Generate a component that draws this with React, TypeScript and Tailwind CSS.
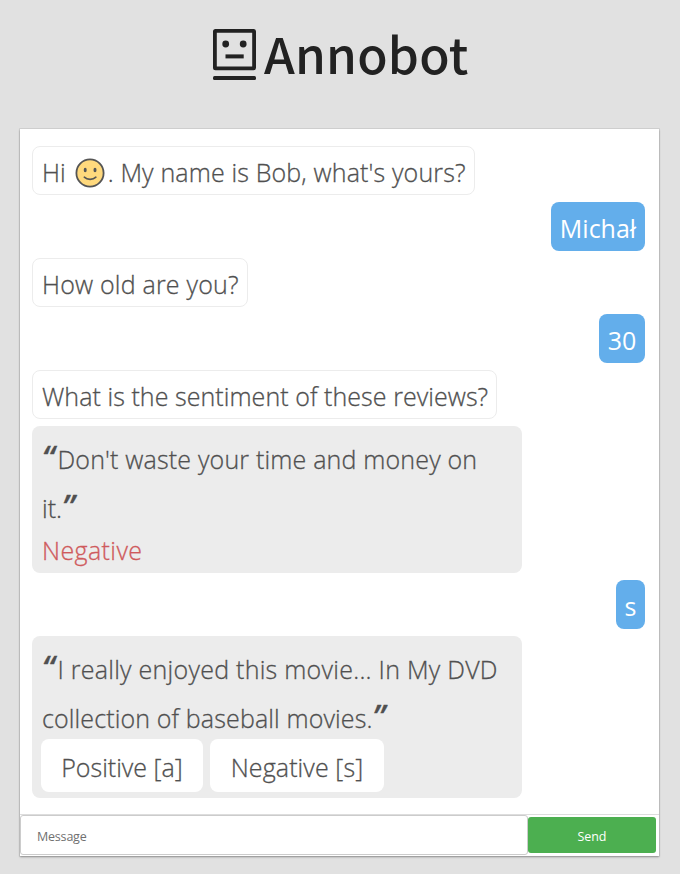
import type { ReactNode } from "react";

function Robot() {
  return (
    <svg className="mt-[29px] h-[51px] w-[43px] shrink-0" viewBox="0 0 43 51" fill="none">
      <rect x="1.9" y="1.9" width="39.2" height="37.5" rx="0.6" stroke="#222" strokeWidth="3.8" />
      <circle cx="12.7" cy="15" r="3.4" fill="#222" />
      <circle cx="30.2" cy="15" r="3.4" fill="#222" />
      <rect x="12.5" y="25.4" width="18.2" height="4" fill="#222" />
      <rect x="0" y="47" width="43" height="4" rx="1.5" fill="#222" />
    </svg>
  );
}

function Smile() {
  return (
    <svg className="mt-[11px] ml-[9px] mr-[3px] h-[30px] w-[30px] shrink-0" viewBox="0 0 30 30" fill="none">
      <circle cx="15" cy="15" r="13.6" fill="#ffd97d" stroke="#555" strokeWidth="1.8" />
      <ellipse cx="10.2" cy="12" rx="1.5" ry="2.2" fill="#555" />
      <ellipse cx="20" cy="12" rx="1.5" ry="2.2" fill="#555" />
      <path d="M9.3 19.2C12.3 22.1 17.9 22.1 20.9 19.2" stroke="#555" strokeWidth="1.6" strokeLinecap="round" />
    </svg>
  );
}

function Bot({ width, children }: { width: string; children: ReactNode }) {
  return (
    <div className={`flex h-[49px] rounded-lg border border-[#ececec] pl-[9px] leading-[51px] ${width}`}>
      {children}
    </div>
  );
}

function User({ width, children }: { width: string; children: ReactNode }) {
  return (
    <div className={`h-[49px] self-end rounded-lg bg-[#63aeeb] text-center font-normal leading-[52px] text-white [-webkit-text-stroke:0px] ${width}`}>
      {children}
    </div>
  );
}

function Quote({ children }: { children: ReactNode }) {
  return <span className="text-[32px] leading-[0] font-semibold italic">{children}</span>;
}

export default function App() {
  return (
    <div className="flex h-[874px] w-[680px] flex-col overflow-hidden bg-[#e1e1e1]">
      <header className="flex h-[129px] shrink-0 pl-[213px]">
        <Robot />
        <h1 className="ml-2 mt-[16px] whitespace-nowrap font-['Noto_Sans_CJK_JP',sans-serif] text-[49.5px] font-medium leading-[74px] tracking-[0.2px] text-[#222]">
          Annobot
        </h1>
      </header>
      <main className="ml-5 flex h-[727px] w-[639px] shrink-0 flex-col bg-white shadow-[0_1px_2px_0_rgba(0,0,0,0.35),0_0_0_1px_rgba(0,0,0,0.06)]">
        <div className="flex h-[685px] flex-col items-start gap-[7px] whitespace-nowrap pl-3 pr-[14px] pt-[17px] font-['Open_Sans',sans-serif] text-[25px] font-light text-[#505050] [-webkit-text-stroke:0.3px]">
          <Bot width="w-[443px]">
            <span>Hi</span>
            <Smile />
            <span className="tracking-[0.15px]">. My name is Bob, what's yours?</span>
          </Bot>
          <User width="w-[94px]">Michał</User>
          <Bot width="w-[216px]">
            <span className="tracking-[0.2px]">How old are you?</span>
          </Bot>
          <User width="w-[46px]">30</User>
          <Bot width="w-[465px]">
            <span className="tracking-[0.06px]">What is the sentiment of these reviews?</span>
          </Bot>
          <section className="h-[147px] w-[490px] rounded-lg bg-[#ececec] pl-[10px] pt-[9px]">
            <p className="h-[49px] leading-[49px]"><Quote>“</Quote><span className="ml-[3px] tracking-[0.18px]">Don't waste your time and money on</span></p>
            <p className="h-[49px] leading-[49px]">it.<Quote>”</Quote></p>
            <p className="leading-[34px] tracking-[0.4px] text-[#cf5a5c]">Negative</p>
          </section>
          <User width="w-[29px]">s</User>
          <section className="h-[162px] w-[490px] rounded-lg bg-[#ececec] pl-[9px] pt-[9px]">
            <p className="ml-px h-[49px] leading-[49px]"><Quote>“</Quote><span className="ml-[3px] tracking-[0.26px]">I really enjoyed this movie... In My DVD</span></p>
            <p className="ml-px h-[45px] leading-[49px] tracking-[0.13px]">collection of baseball movies.<Quote>”</Quote></p>
            <div className="flex gap-[7px] text-center leading-[57px]">
              <button className="h-[53px] w-[162px] rounded-lg bg-white">Positive [a]</button>
              <button className="h-[53px] w-[174px] rounded-lg bg-white tracking-[0.1px]">Negative [s]</button>
            </div>
          </section>
        </div>
        <form className="flex h-[42px] border-t border-[#ddd] font-['Open_Sans',sans-serif] text-[12.5px]">
          <div className="h-[40px] w-[508px] rounded-[3px] border border-[#ccc] pl-4 leading-[42px] text-[#707070]"><span className="tracking-[-0.2px]">Message</span></div>
          <button type="button" className="mt-[2px] h-[36px] w-[128px] rounded-[3px] bg-[#4caf50] pt-[4px] text-white tracking-[-0.1px]">Send</button>
        </form>
      </main>
    </div>
  );
}
